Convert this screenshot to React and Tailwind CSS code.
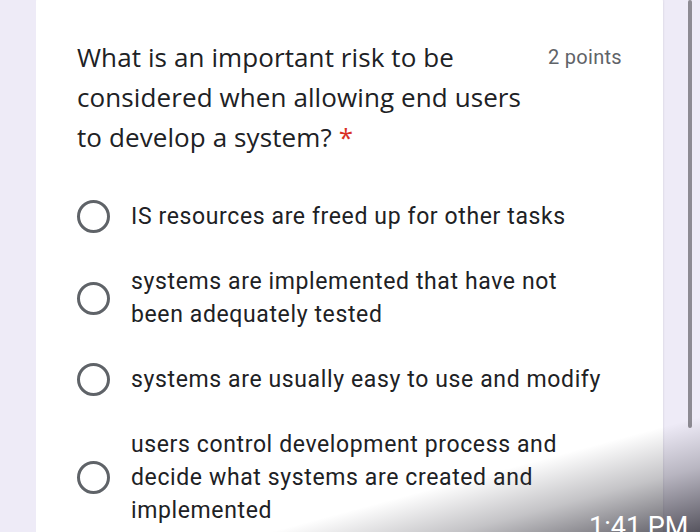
export default function App() {
  const options = [
    ["IS resources are freed up for other tasks"],
    ["systems are implemented that have not", "been adequately tested"],
    ["systems are usually easy to use and modify"],
    ["users control development process and", "decide what systems are created and", "implemented"],
  ];
  return (
    <div className="relative w-[700px] h-[532px] overflow-hidden bg-[#eeebf7]">
      <div className="ml-[36px] w-[627px] -mt-[8px] h-[580px] bg-white rounded-[10px] pt-[45px] pl-[41px] pr-[41px] shadow-[1px_0_2px_rgba(0,0,0,0.06)]">
        <div className="flex justify-between items-start">
          <div className="text-[26px] leading-[40px] tracking-[0.1px] text-[#202124] font-['Open_Sans',sans-serif]">
            What is an important risk to be
            <br />
            considered when allowing end users
            <br />
            to develop a system? <span className="text-[#d93025]">*</span>
          </div>
          <div className="text-[20px] leading-[40px] tracking-[0.3px] text-[#5f6368] font-['Roboto',sans-serif]">2 points</div>
        </div>
        <div className="mt-[43px] flex flex-col gap-[32px] font-['Roboto',sans-serif]">
          {options.map((lines, i) => (
            <div key={i} className="flex items-center gap-[21px]">
              <div className="w-[33px] h-[33px] shrink-0 rounded-full border-[3px] border-[#5f6368]" />
              <div className="text-[23px] leading-[33px] tracking-[0.62px] text-[#202124]">
                {lines.map((l, j) => (
                  <div key={j}>{l}</div>
                ))}
              </div>
            </div>
          ))}
        </div>
      </div>
      <div className="absolute left-[688px] top-0 w-[4px] h-[428px] rounded-full bg-[#8d8b93]" />
      <div className="absolute inset-0 pointer-events-none bg-[linear-gradient(165deg,rgba(60,58,68,0)_84%,rgba(60,58,68,0.3)_91%,rgba(60,58,68,0.85)_100%)]" />
      <div className="absolute left-[589px] top-[512px] text-[27px] leading-[30px] text-white font-['Roboto',sans-serif] whitespace-nowrap">
        1:41 PM
      </div>
    </div>
  );
}
